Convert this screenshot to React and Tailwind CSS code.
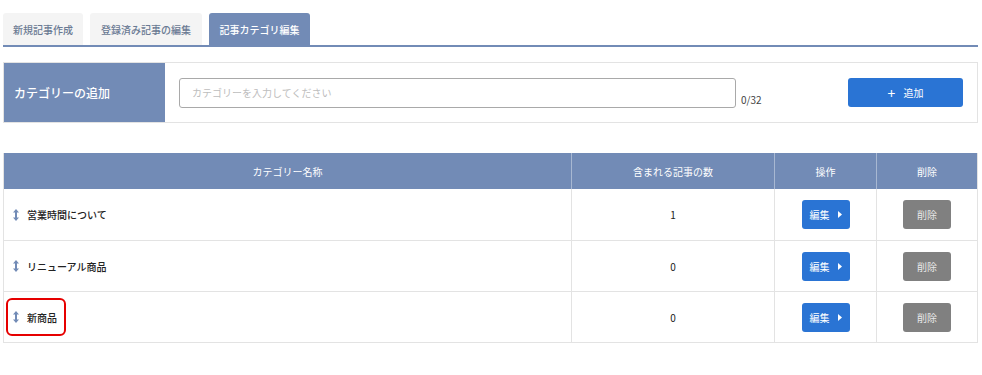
const rows = [
  { name: '営業時間について', count: 1 },
  { name: 'リニューアル商品', count: 0 },
  { name: '新商品', count: 0, marked: true },
]

function SortIcon() {
  return (
    <svg width="6" height="12" viewBox="0 0 6 12" className="shrink-0">
      <path d="M3 0 L6 3.5 H4 V8.5 H6 L3 12 L0 8.5 H2 V3.5 H0 Z" fill="#728bb6" />
    </svg>
  )
}

export default function App() {
  return (
    <div
      className="w-[982px] h-[375px] bg-white text-[#333] relative"
      style={{ fontFamily: '"Noto Sans CJK JP", "Noto Sans", sans-serif' }}
    >
      {/* tabs */}
      <div className="pt-[13px] px-[3px]">
        <div className="flex gap-[7px] border-b-2 border-[#728bb6] w-[975px]">
          <div className="w-[80px] h-[32px] flex items-center justify-center bg-[#f4f4f4] rounded-t-[3px] text-[10px] font-medium text-[#6a7a93]">新規記事作成</div>
          <div className="w-[112px] h-[32px] flex items-center justify-center bg-[#f4f4f4] rounded-t-[3px] text-[10px] font-medium text-[#6a7a93]">登録済み記事の編集</div>
          <div className="w-[101px] h-[32px] flex items-center justify-center bg-[#728bb6] rounded-t-[3px] text-[10px] font-medium text-white">記事カテゴリ編集</div>
        </div>
      </div>

      {/* add category */}
      <div className="mt-[15px] mx-[3px] w-[975px] h-[61px] flex border border-[#e3e3e3]">
        <div className="w-[161px] bg-[#728bb6] text-white text-[12px] font-medium flex items-center pl-[10px]">カテゴリーの追加</div>
        <div className="flex-1 flex items-center pl-[14px]">
          <div className="w-[557px] h-[30px] border border-[#a9a9a9] rounded-[3px] flex items-center px-[12px] text-[10px] text-[#bdbdbd]">
            カテゴリーを入力してください
          </div>
          <div className="self-end mb-[15px] ml-[5px] text-[10px] text-[#444]">0/32</div>
          <div className="ml-auto mr-[14px] w-[115px] h-[29px] bg-[#2a74d4] rounded-[3px] text-white text-[10px] flex items-center justify-center gap-[8px]">
            <span className="text-[14px] leading-none">+</span>
            <span>追加</span>
          </div>
        </div>
      </div>

      {/* table */}
      <div className="mt-[30px] mx-[3px] w-[975px] border border-[#e3e3e3] border-t-0">
        <div className="grid grid-cols-[568px_203px_102px_1fr] h-[36px] bg-[#728bb6] text-white text-[10px]">
          <div className="flex items-center justify-center border-r border-[#a8b8d2]">カテゴリー名称</div>
          <div className="flex items-center justify-center border-r border-[#a8b8d2]">含まれる記事の数</div>
          <div className="flex items-center justify-center border-r border-[#a8b8d2]">操作</div>
          <div className="flex items-center justify-center">削除</div>
        </div>
        {rows.map((r, i) => (
          <div
            key={r.name}
            className={`grid grid-cols-[568px_203px_102px_1fr] h-[51px] text-[10px] ${i > 0 ? 'border-t border-[#e3e3e3]' : ''}`}
          >
            <div className="flex items-center gap-[8px] pl-[9px] border-r border-[#e3e3e3]">
              <SortIcon />
              <span className="text-[#222] font-medium">{r.name}</span>
            </div>
            <div className="flex items-center justify-center border-r border-[#e3e3e3] text-[#222]">{r.count}</div>
            <div className="flex items-center justify-center border-r border-[#e3e3e3]">
              <div className="w-[48px] h-[29px] bg-[#2a74d4] rounded-[3px] text-white flex items-center justify-center gap-[8px]">
                <span>編集</span>
                <svg width="4" height="7" viewBox="0 0 4 7"><path d="M0 0 L4 3.5 L0 7 Z" fill="white" /></svg>
              </div>
            </div>
            <div className="flex items-center justify-center">
              <div className="w-[48px] h-[29px] bg-[#808080] rounded-[3px] text-[#e8e8e8] flex items-center justify-center">削除</div>
            </div>
          </div>
        ))}
      </div>

      {/* annotation */}
      <div className="absolute left-[6px] top-[298px] w-[60px] h-[38px] border-2 border-[#e60000] rounded-[6px]" />
    </div>
  )
}
